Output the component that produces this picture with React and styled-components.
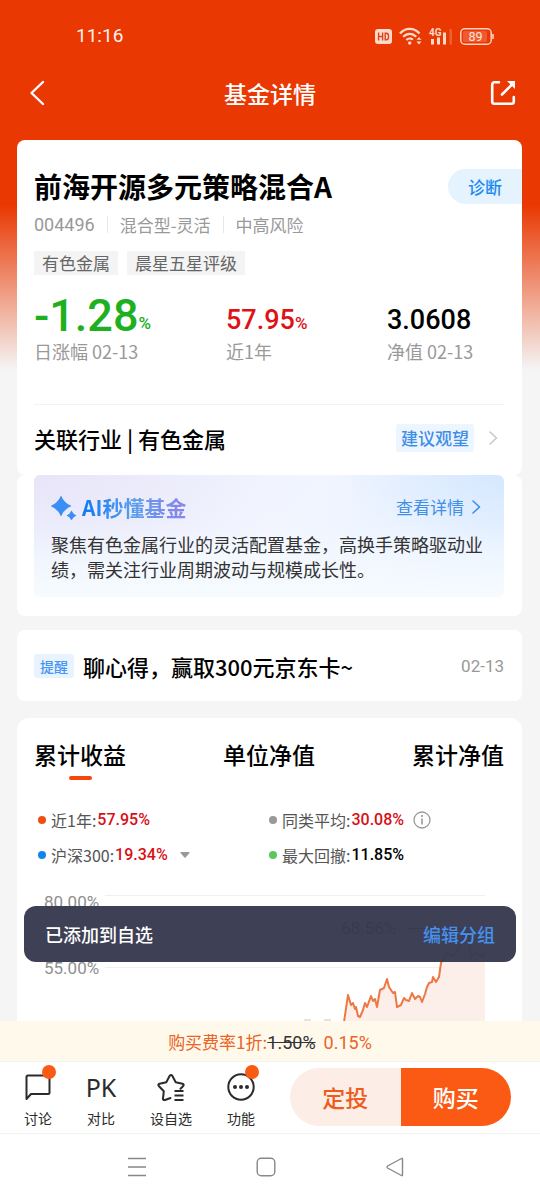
import React, { useState } from "react";
import styled, { createGlobalStyle } from "styled-components";

const numberFont = `Roboto, "Noto Sans CJK SC", sans-serif`;

const GlobalStyle = createGlobalStyle`
  * {
    box-sizing: border-box;
  }

  body {
    margin: 0;
    font-family: "Noto Sans CJK SC", "Noto Sans", sans-serif;
    color: #000;
  }

  button {
    font: inherit;
    color: inherit;
    background: none;
    border: 0;
    padding: 0;
    cursor: pointer;
  }

  a {
    color: inherit;
    text-decoration: none;
  }

  svg {
    display: block;
    flex-shrink: 0;
  }

  h1, h2, p, dl, dd, dt {
    margin: 0;
    font-weight: inherit;
  }
`;

const Screen = styled.div`
  display: flex;
  flex-direction: column;
  height: 100vh;
  background: #fff;
`;

const Content = styled.div`
  position: relative;
  flex: 1;
  min-height: 0;
  overflow: hidden;
  background: #f5f5f5 linear-gradient(#e93802 0, #e93802 205px, #f5f5f5 370px);
`;

const StatusBar = styled.div`
  display: flex;
  align-items: center;
  justify-content: space-between;
  height: 72px;
  padding: 0 46px 0 76px;
  color: #fff0ea;
  font-family: ${numberFont};
  font-size: 19px;
  line-height: 24px;
`;

const StatusIcons = styled.div`
  display: flex;
  align-items: center;
  gap: 7px;
`;

const NavBar = styled.header`
  display: flex;
  align-items: center;
  justify-content: space-between;
  height: 42px;
  padding: 0 24px;
  margin-bottom: 26px;
  color: #fff;
`;

const NavTitle = styled.h1`
  font-size: 23px;
  line-height: 32px;
  font-weight: 500;
`;

const NavButton = styled.button`
  display: flex;
`;

const Card = styled.section`
  margin: 0 18px ${(p) => p.$gap || 0}px 17px;
  padding: 0 18px 0 17px;
  background: #fff;
  border-radius: 8px;
`;

const FundCard = styled(Card)`
  padding-top: 29px;
  padding-bottom: 4px;
`;

const FundHead = styled.div`
  display: flex;
  align-items: center;
  justify-content: space-between;
  height: 35px;
  margin-right: -18px;
`;

const FundName = styled.h2`
  font-size: 28px;
  line-height: 35px;
  font-weight: 700;
`;

const DiagnoseButton = styled.button`
  height: 35px;
  padding: 0 20px;
  border-radius: 18px 0 0 18px;
  background: #e5f3ff;
  color: #1b8bf5;
  font-size: 17px;
  line-height: 35px;
  font-weight: 500;
`;

const Meta = styled.div`
  display: flex;
  align-items: center;
  height: 22px;
  margin-top: 9px;
  color: #999;
  font-size: 17px;

  span + span {
    margin-left: 12px;
    padding-left: 12px;
    line-height: 17px;
    border-left: 1px solid #e6e6e6;
  }
`;

const FundCode = styled.span`
  font-family: ${numberFont};
  font-size: 18px;
`;

const Tags = styled.div`
  display: flex;
  gap: 9px;
  margin-top: 16px;
`;

const Tag = styled.span`
  padding: 0 8px;
  background: #f4f4f4;
  color: #666;
  font-size: 17px;
  line-height: 24px;
`;

const Stats = styled.dl`
  display: grid;
  grid-template-columns: 192fr 161fr 117fr;
  margin-top: 15px;
`;

const Stat = styled.div`
  display: flex;
  flex-direction: column-reverse;
`;

const StatValue = styled.dd`
  display: flex;
  align-items: flex-end;
  height: 44px;
  color: ${(p) => p.$color};
  font-family: ${numberFont};
  font-size: ${(p) => (p.$large ? 45 : 27)}px;
  line-height: ${(p) => (p.$large ? 36 : 28)}px;
  font-weight: 500;

  small {
    font-size: 17px;
    line-height: 22px;
  }
`;

const StatLabel = styled.dt`
  margin-top: 5px;
  color: #999;
  font-size: 18px;
  line-height: 24px;
`;

const IndustryRow = styled.a`
  display: flex;
  align-items: center;
  height: 67px;
  margin-top: 41px;
  padding-right: 6px;
  border-top: 1px solid #f3f3f3;
  font-size: 22px;
  line-height: 30px;
  font-weight: 500;
`;

const Advice = styled.span`
  margin-left: auto;
  margin-right: 15px;
  padding: 0 5px;
  border-radius: 3px;
  background: #edf5ff;
  color: #3f8ee8;
  font-size: 17px;
  line-height: 28px;
`;

const AiCard = styled(Card)`
  padding-bottom: 19px;
`;

const AiBox = styled.div`
  padding: 17px 8px 15px 17px;
  border-radius: 6px;
  background:
    linear-gradient(rgba(244, 250, 255, 0) 40%, #f6fbff 100%),
    radial-gradient(ellipse 35% 60% at 100% 0, #d6e8ff, rgba(214, 232, 255, 0)),
    radial-gradient(ellipse 60% 90% at 0 0, #e8e5f8, rgba(236, 233, 250, 0)),
    linear-gradient(90deg, #eef3fe, #f3f6ff 50%, #e6f1ff);
`;

const AiHead = styled.div`
  display: flex;
  align-items: center;
  height: 30px;
  padding-right: 15px;
`;

const AiTitle = styled.h2`
  margin-left: 5px;
  font-size: 21px;
  line-height: 30px;
  font-weight: 700;
  color: transparent;
  background: linear-gradient(90deg, #0f79f3, #5a9fee 50%, #8f83ea);
  background-clip: text;
`;

const AiLink = styled.a`
  display: flex;
  align-items: center;
  gap: 8px;
  margin-left: auto;
  color: #3f8ee8;
  font-size: 17px;
  line-height: 30px;
`;

const AiText = styled.p`
  margin-top: 10px;
  color: #333;
  font-size: 18px;
  line-height: 25px;
`;

const Notice = styled.a`
  display: flex;
  align-items: center;
  height: 71px;
  font-size: 22px;
  line-height: 28px;
  font-weight: 500;
`;

const NoticeBadge = styled.span`
  margin-right: 9px;
  padding: 0 6px;
  border-radius: 3px;
  background: #e8f3ff;
  color: #4596f0;
  font-size: 14px;
  line-height: 24px;
`;

const NoticeDate = styled.time`
  margin-left: auto;
  color: #999;
  font-family: ${numberFont};
  font-size: 17px;
  font-weight: 400;
`;

const ChartCard = styled(Card)`
  padding-top: 20px;
  border-radius: 12px 12px 0 0;
`;

const Tabs = styled.div`
  display: flex;
  justify-content: space-between;
  height: 42px;
`;

const TabButton = styled.button`
  display: flex;
  flex-direction: column;
  align-items: center;
  font-size: 23px;
  line-height: 32px;
  font-weight: 500;

  &::after {
    content: "";
    width: 23px;
    height: 4px;
    margin-top: 6px;
    border-radius: 2px;
    background: ${(p) => (p.$active ? "#f8460a" : "transparent")};
  }
`;

const Legend = styled.div`
  display: grid;
  grid-template-columns: 231fr 235fr;
  grid-auto-rows: 35px;
  margin-top: 22px;
  padding-left: 4px;
`;

const LegendItem = styled.div`
  display: flex;
  align-items: center;
  color: #555;
  font-size: 16px;

  &::before {
    content: "";
    width: 8px;
    height: 8px;
    margin-right: 5px;
    border-radius: 50%;
    background: ${(p) => p.$dot};
  }

  b {
    margin-left: 1px;
    color: ${(p) => p.$color || "#d80f16"};
    font-family: ${numberFont};
    font-weight: 500;
  }

  svg {
    margin-left: ${(p) => p.$iconGap || 0}px;
  }
`;

const Chart = styled.svg`
  width: 100%;
  height: auto;
  font-family: ${numberFont};
  font-size: 17px;
`;

const Toast = styled.div`
  position: absolute;
  left: 24px;
  right: 24px;
  bottom: 59px;
  display: flex;
  align-items: center;
  justify-content: space-between;
  height: 56px;
  padding: 0 21px;
  border-radius: 12px;
  background: rgba(56, 58, 79, 0.97);
  color: #fff;
  font-size: 18px;
  line-height: 24px;
  font-weight: 500;
`;

const ToastAction = styled.button`
  color: #4791ee;
`;

const FeeBar = styled.div`
  height: 40px;
  background: #fff9ec;
  color: #ea6425;
  font-size: 17px;
  line-height: 42px;
  text-align: center;
`;

const OldRate = styled.del`
  margin-right: 8px;
  color: #333;
  font-family: ${numberFont};
  font-size: 18px;
`;

const Rate = styled.span`
  font-family: ${numberFont};
  font-size: 18px;
`;

const ActionBar = styled.div`
  display: flex;
  align-items: center;
  gap: 35px;
  height: 73px;
  padding: 0 29px 2px 24px;
  border-top: 1px solid #f3f3f3;
  border-bottom: 1px solid #f3f3f3;
`;

const Action = styled.button`
  position: relative;
  display: flex;
  flex-direction: column;
  align-items: center;
  gap: 7px;
  margin-top: 7px;
  color: #2b2b2b;
  font-size: 14px;
  line-height: 20px;
  white-space: nowrap;
`;

const RedDot = styled.i`
  position: absolute;
  top: -8px;
  right: -4px;
  width: 14px;
  height: 14px;
  border-radius: 50%;
  background: #fb5a14;
`;

const PkIcon = styled.span`
  display: flex;
  justify-content: center;
  width: 28px;
  font-family: "Noto Sans", sans-serif;
  font-size: 25px;
  line-height: 28px;
`;

const BuyButtons = styled.div`
  display: flex;
  flex: 1;
  height: 58px;
  border-radius: 29px;
  overflow: hidden;
`;

const BuyButton = styled.button`
  flex: 1;
  background: ${(p) => (p.$primary ? "#fb5a14" : "#fcede6")};
  color: ${(p) => (p.$primary ? "#fff" : "#ee5c1c")};
  font-size: 23px;
  font-weight: 500;
`;

const SystemNav = styled.nav`
  display: flex;
  align-items: center;
  justify-content: center;
  gap: 109px;
  height: 66px;
  padding-right: 9px;
`;

function Chevron({ color, size = 14 }) {
  return (
    <svg width="9" height={size} viewBox="0 0 9 14" fill="none" stroke={color} strokeWidth="1.6">
      <path d="M1 1l6.500 6L1 13" strokeLinecap="round" strokeLinejoin="round" />
    </svg>
  );
}

function HdIcon() {
  return (
    <svg width="17" height="15" viewBox="0 0 17 15">
      <rect width="17" height="15" rx="3" fill="#ffd9ca" />
      <path
        d="M3.6 3.5v8M7.6 3.5v8M3.6 7.5h4M10.2 4.2v6.6h1.2c1.4 0 2.2-1 2.2-3.3s-.8-3.3-2.2-3.3z"
        fill="none"
        stroke="#d9441a"
        strokeWidth="1.4"
      />
    </svg>
  );
}

function WifiIcon() {
  return (
    <svg width="23" height="18" viewBox="0 0 23 18" fill="none" stroke="#ffd9ca" strokeWidth="2.2">
      <path d="M1 6.5C6.500 0.300 15 0.300 20.500 6.500" />
      <path d="M4.200 9.800c3.700-4 9.300-4 13 0" />
      <path d="M7.400 13c2-2 4.800-2 6.400-.2" />
      <circle cx="10.700" cy="16" r="1.700" fill="#ffd9ca" stroke="none" />
      <path d="M17.500 12.800l2.500-2.800 2.500 2.800zM17.500 14.600l2.500 2.800 2.500-2.800z" fill="#ffd9ca" stroke="none" />
    </svg>
  );
}

function SignalIcon() {
  return (
    <svg width="24" height="18" viewBox="0 0 24 18" fill="#ffd9ca">
      <text x="0" y="9" fontSize="10" fontWeight="700" fontFamily="Roboto, sans-serif">4G</text>
      <rect x="2" y="12" width="3" height="5.500" />
      <rect x="8" y="10.500" width="3" height="7" />
      <rect x="14" y="5.500" width="3" height="12" />
      <rect x="20.500" y="2" width="2.500" height="15.500" opacity="0.250" />
    </svg>
  );
}

function BatteryIcon() {
  return (
    <svg width="34" height="17" viewBox="0 0 34 17">
      <rect x="0.800" y="0.800" width="30.400" height="15.400" rx="4" fill="none" stroke="#ffd0be" strokeWidth="1.500" />
      <rect x="3" y="3" width="24" height="11" rx="1.500" fill="#f05a30" />
      <path d="M33 6v5" stroke="#ffd0be" strokeWidth="1.600" />
      <text x="15.500" y="13" fontSize="12.500" fontFamily="Roboto, sans-serif" textAnchor="middle" fill="#ffe6dc">
        89
      </text>
    </svg>
  );
}

function BackIcon() {
  return (
    <svg width="26" height="26" viewBox="0 0 26 26" fill="none" stroke="#fff" strokeWidth="2.400">
      <path d="M19 2L7.500 13 19 24" strokeLinecap="round" strokeLinejoin="round" />
    </svg>
  );
}

function ShareIcon() {
  return (
    <svg width="26" height="26" viewBox="0 0 26 26" fill="none" stroke="#fff" strokeWidth="2.600">
      <path d="M9 2.200H4.500A2.300 2.300 0 0 0 2.200 4.500v17a2.300 2.300 0 0 0 2.300 2.300h17a2.300 2.300 0 0 0 2.300-2.300v-4.500" strokeLinecap="round" />
      <path d="M12 14.500L23 3.500" strokeLinecap="round" />
      <path d="M17 1h8v8z" fill="#fff" stroke="none" />
    </svg>
  );
}

function SparkleIcon() {
  return (
    <svg width="26" height="26" viewBox="0 0 26 26" fill="#3a8ef6">
      <path d="M10 1.500Q13 9 20.500 12 13 15 10 22.500 7 15-.5 12 7 9 10 1.500z" />
      <path d="M20.500 16.500q1.500 3.500 5 5-3.500 1.500-5 5-1.500-3.500-5-5 3.500-1.500 5-5z" />
    </svg>
  );
}

function InfoIcon() {
  return (
    <svg width="18" height="18" viewBox="0 0 18 18" fill="none" stroke="#999" strokeWidth="1.300">
      <circle cx="9" cy="9" r="8" />
      <path d="M9 7.500v6" strokeWidth="1.600" />
      <circle cx="9" cy="5" r="1.100" fill="#999" stroke="none" />
    </svg>
  );
}

function CaretIcon() {
  return (
    <svg width="10" height="6" viewBox="0 0 10 6" fill="#999">
      <path d="M1 0h8q1 .3.500 1L5.600 5.500q-.6.600-1.200 0L.5 1Q0 .3 1 0z" />
    </svg>
  );
}

function ChatIcon() {
  return (
    <svg width="28" height="28" viewBox="0 0 28 28" fill="none" stroke="#2b2b2b" strokeWidth="2" strokeLinejoin="round">
      <path d="M4 2.500h20a1.500 1.500 0 0 1 1.500 1.500v15.500a1.500 1.500 0 0 1-1.500 1.500H7L2.500 26V4A1.500 1.500 0 0 1 4 2.500z" />
    </svg>
  );
}

function StarListIcon() {
  return (
    <svg width="28" height="28" viewBox="0 0 28 28" fill="none" stroke="#2b2b2b" strokeWidth="2" strokeLinejoin="round" strokeLinecap="round">
      <path d="M13.500 25l-5.500 2q-2.200.5-2-1.700l.8-7-5-5.300q-1.200-1.700.8-2.300l6.700-1.500 3.400-6.400q1.300-1.700 2.600 0l3.400 6.400 6.700 1.500q2 .6.800 2.300l-2.700 2.800" />
      <path d="M17.500 18h9M17.500 22.500h9M17.500 27h9" strokeWidth="1.900" strokeLinecap="butt" />
    </svg>
  );
}

function MoreIcon() {
  return (
    <svg width="28" height="28" viewBox="0 0 28 28" fill="none" stroke="#2b2b2b" strokeWidth="2">
      <circle cx="14" cy="14" r="12.700" />
      <g fill="#2b2b2b" stroke="none">
        <circle cx="8" cy="14" r="2" />
        <circle cx="14" cy="14" r="2" />
        <circle cx="20" cy="14" r="2" />
      </g>
    </svg>
  );
}

const line =
  "310,150 314,123 317,133 319,131 321,137 322,135 324,144 326,145 329,138 331,131 333,135 337,124 339,129 341,127 343,135 346,118 350,116 353,107 355,115 357,118 359,121 361,120 363,135 367,133 370,126 372,128 375,129 378,121 381,127 384,124 386,125 388,130 391,122 393,115 395,111 398,110 399,105 402,110 405,105 407,91 409,88 413,80 417,84 422,81 427,73 431,63 434,60 437,85 442,81 448,84 451,81";

function ReturnChart() {
  return (
    <Chart viewBox="0 0 470 200" role="img" aria-label="累计收益">
      <path d="M71 23.500h380M71 95.500h380M71 167.500h380" stroke="#f0f0f0" />
      <g fill="#8f8f8f">
        <text x="10" y="36">80.00%</text>
        <text x="10" y="102">55.00%</text>
      </g>
      <path d="M270 148h7M290 148h7M317 148h8M328 148h8" stroke="#e6e2e2" strokeWidth="2" />
      <polygon points={`${line} 451,200 303,200`} fill="#fcefea" />
      <polyline points={line} fill="none" stroke="#ee7744" strokeWidth="2" strokeLinejoin="round" />
      <text x="307" y="62" fill="#444">68.56%</text>
      <path d="M373 56.500h61" stroke="#444" />
    </Chart>
  );
}

const stats = [
  { label: "日涨幅 02-13", value: "-1.28", unit: "%", color: "#1eb01e", large: true },
  { label: "近1年", value: "57.95", unit: "%", color: "#df1216" },
  { label: "净值 02-13", value: "3.0608", color: "#000" },
];

const tabs = ["累计收益", "单位净值", "累计净值"];

export default function App() {
  const [activeTab, setActiveTab] = useState(0);

  return (
    <Screen>
      <GlobalStyle />
      <Content>
        <StatusBar>
          <span>11:16</span>
          <StatusIcons>
            <HdIcon />
            <WifiIcon />
            <SignalIcon />
            <BatteryIcon />
          </StatusIcons>
        </StatusBar>
        <NavBar>
          <NavButton aria-label="返回">
            <BackIcon />
          </NavButton>
          <NavTitle>基金详情</NavTitle>
          <NavButton aria-label="分享">
            <ShareIcon />
          </NavButton>
        </NavBar>

        <FundCard>
          <FundHead>
            <FundName>前海开源多元策略混合A</FundName>
            <DiagnoseButton>诊断</DiagnoseButton>
          </FundHead>
          <Meta>
            <FundCode>004496</FundCode>
            <span>混合型-灵活</span>
            <span>中高风险</span>
          </Meta>
          <Tags>
            <Tag>有色金属</Tag>
            <Tag>晨星五星评级</Tag>
          </Tags>
          <Stats>
            {stats.map((s) => (
              <Stat key={s.label}>
                <StatLabel>{s.label}</StatLabel>
                <StatValue $color={s.color} $large={s.large}>
                  {s.value}
                  {s.unit && <small>{s.unit}</small>}
                </StatValue>
              </Stat>
            ))}
          </Stats>
          <IndustryRow href="#industry">
            关联行业 | 有色金属
            <Advice>建议观望</Advice>
            <Chevron color="#c8c8c8" />
          </IndustryRow>
        </FundCard>

        <AiCard $gap={14}>
          <AiBox>
            <AiHead>
              <SparkleIcon />
              <AiTitle>AI秒懂基金</AiTitle>
              <AiLink href="#ai">
                查看详情
                <Chevron color="#3f8ee8" />
              </AiLink>
            </AiHead>
            <AiText>聚焦有色金属行业的灵活配置基金，高换手策略驱动业绩，需关注行业周期波动与规模成长性。</AiText>
          </AiBox>
        </AiCard>

        <Card $gap={17}>
          <Notice href="#notice">
            <NoticeBadge>提醒</NoticeBadge>
            聊心得，赢取300元京东卡~
            <NoticeDate>02-13</NoticeDate>
          </Notice>
        </Card>

        <ChartCard>
          <Tabs role="tablist">
            {tabs.map((t, i) => (
              <TabButton
                key={t}
                role="tab"
                aria-selected={i === activeTab}
                $active={i === activeTab}
                onClick={() => setActiveTab(i)}
              >
                {t}
              </TabButton>
            ))}
          </Tabs>
          <Legend>
            <LegendItem $dot="#f04f14">
              近1年:<b>57.95%</b>
            </LegendItem>
            <LegendItem $dot="#999" $iconGap={9}>
              同类平均:<b>30.08%</b>
              <InfoIcon />
            </LegendItem>
            <LegendItem $dot="#1585ea" $iconGap={12}>
              沪深300:<b>19.34%</b>
              <CaretIcon />
            </LegendItem>
            <LegendItem $dot="#5cc75c" $color="#000">
              最大回撤:<b>11.85%</b>
            </LegendItem>
          </Legend>
          <ReturnChart />
        </ChartCard>

        <Toast role="status">
          已添加到自选
          <ToastAction>编辑分组</ToastAction>
        </Toast>
      </Content>

      <FeeBar>
        购买费率1折:<OldRate>1.50%</OldRate>
        <Rate>0.15%</Rate>
      </FeeBar>
      <ActionBar>
        <Action>
          <ChatIcon />
          讨论
          <RedDot />
        </Action>
        <Action>
          <PkIcon>PK</PkIcon>
          对比
        </Action>
        <Action>
          <StarListIcon />
          设自选
        </Action>
        <Action>
          <MoreIcon />
          功能
          <RedDot />
        </Action>
        <BuyButtons>
          <BuyButton>定投</BuyButton>
          <BuyButton $primary>购买</BuyButton>
        </BuyButtons>
      </ActionBar>
      <SystemNav>
        <svg width="20" height="20" viewBox="0 0 20 20" stroke="#888" strokeWidth="1.400">
          <path d="M1 1.500h18M1 10h18M1 18.500h18" />
        </svg>
        <svg width="20" height="20" viewBox="0 0 20 20" fill="none" stroke="#888" strokeWidth="1.400">
          <rect x="1.200" y="1.200" width="17.600" height="17.600" rx="4" />
        </svg>
        <svg width="20" height="20" viewBox="0 0 20 20" fill="none" stroke="#888" strokeWidth="1.400" strokeLinejoin="round">
          <path d="M17.500 2v16q0 1-1 .5L2.500 11q-1-1 0-2l14-7.500q1-.5 1 .5z" />
        </svg>
      </SystemNav>
    </Screen>
  );
}
